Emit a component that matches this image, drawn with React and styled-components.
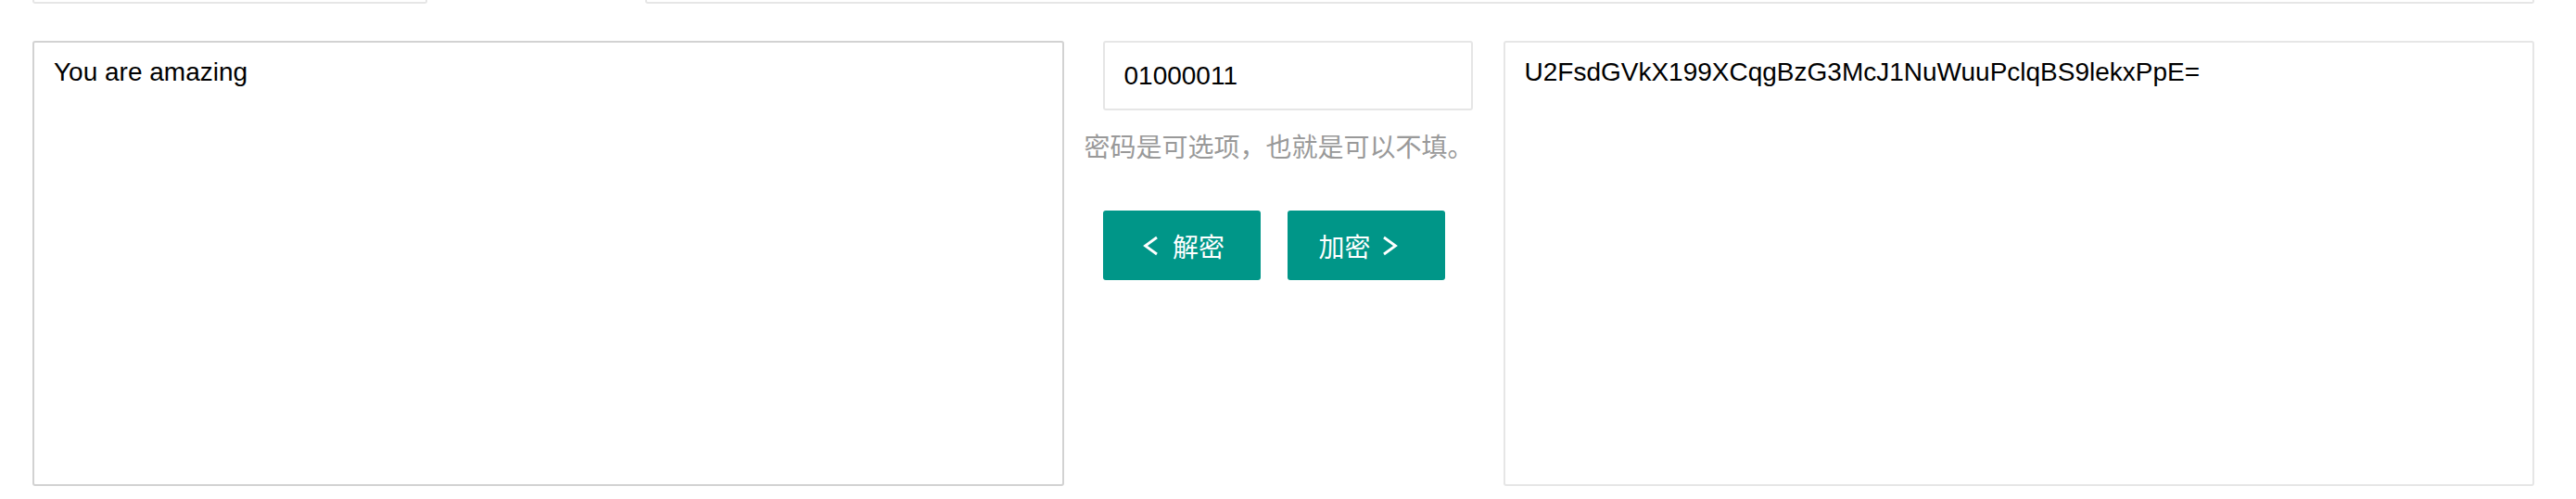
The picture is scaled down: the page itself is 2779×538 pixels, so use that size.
import React from 'react';
import styled, { createGlobalStyle } from 'styled-components';

const GlobalStyle = createGlobalStyle`
  html, body {
    margin: 0;
    padding: 0;
    background: #ffffff;
  }
  body {
    font-family: "Liberation Sans", Arial, "Noto Sans CJK SC", sans-serif;
  }
`;

const Page = styled.div`
  padding: 0 45px 0 35px;
  box-sizing: border-box;
  width: 100%;
`;

const TopRow = styled.div`
  display: flex;
  height: 4px;
`;

const FieldStub = styled.div`
  box-sizing: border-box;
  height: 4px;
  width: ${(p) => (p.$width ? `${p.$width}px` : 'auto')};
  flex: ${(p) => (p.$grow ? 1 : 'none')};
  margin-left: ${(p) => p.$offset || 0}px;
  border: 2px solid #e6e6e6;
  border-top: none;
  border-radius: 0 0 3px 3px;
`;

const MainRow = styled.div`
  display: flex;
  align-items: flex-start;
  margin-top: 40px;
`;

const TextBox = styled.textarea`
  box-sizing: border-box;
  display: block;
  width: 1113px;
  height: 480px;
  margin: 0;
  padding: 12px 21px;
  border: 2px solid ${(p) => (p.$hover ? '#d2d2d2' : '#e6e6e6')};
  border-radius: 3px;
  resize: none;
  outline: none;
  background: #fff;
  color: #000;
  font-family: "Liberation Sans", Arial, sans-serif;
  font-size: 28px;
  line-height: 40px;
`;

const Middle = styled.div`
  width: 420px;
  margin: 0 32px 0 22px;
  display: flex;
  flex-direction: column;
`;

const KeyInput = styled.input`
  box-sizing: border-box;
  display: block;
  width: 399px;
  height: 75px;
  margin: 0 0 0 20px;
  padding: 0 21px;
  border: 2px solid #e6e6e6;
  border-radius: 3px;
  outline: none;
  color: #000;
  background: #fff;
  font-family: "Liberation Sans", Arial, sans-serif;
  font-size: 28px;
`;

const Hint = styled.div`
  margin-top: 19px;
  color: #999999;
  font-family: "Noto Sans CJK SC", "Liberation Sans", sans-serif;
  font-size: 28px;
  line-height: 38px;
  white-space: nowrap;
`;

const Actions = styled.div`
  display: flex;
  gap: 29px;
  margin: 51px 0 0 20px;
`;

const Button = styled.button`
  box-sizing: border-box;
  width: 170px;
  height: 75px;
  padding: 0 ${(p) => p.$padRight || 0}px 0 ${(p) => p.$padLeft || 0}px;
  border: none;
  border-radius: 3px;
  background: #009688;
  color: #ffffff;
  display: flex;
  align-items: center;
  justify-content: center;
  gap: ${(p) => p.$gap || 14}px;
  font-family: "Noto Sans CJK SC", "Liberation Sans", sans-serif;
  font-size: 28px;
  cursor: pointer;
`;

const Chevron = ({ dir }) => (
  <svg width="17" height="24" viewBox="0 0 17 24" fill="none">
    <polyline
      points={dir === 'left' ? '15,3 2.5,12 15,21' : '2,3 14.5,12 2,21'}
      stroke="#ffffff"
      strokeWidth="2.8"
      strokeLinejoin="miter"
    />
  </svg>
);

export default function App() {
  return (
    <>
      <GlobalStyle />
      <Page>
        <TopRow>
          <FieldStub $width={426} />
          <FieldStub $grow $offset={235} />
        </TopRow>
        <MainRow>
          <TextBox $hover defaultValue="You are amazing" />
          <Middle>
            <KeyInput defaultValue="01000011" />
            <Hint>密码是可选项，也就是可以不填。</Hint>
            <Actions>
              <Button $padLeft={5} $gap={15}>
                <Chevron dir="left" />
                解密
              </Button>
              <Button $padRight={17} $gap={12}>
                加密
                <Chevron dir="right" />
              </Button>
            </Actions>
          </Middle>
          <TextBox defaultValue="U2FsdGVkX199XCqgBzG3McJ1NuWuuPclqBS9lekxPpE=" />
        </MainRow>
      </Page>
    </>
  );
}
